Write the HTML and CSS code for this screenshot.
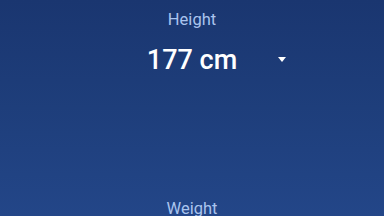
FILE: index.html
```html
<!DOCTYPE html>
<html lang="en">
<head>
  <meta charset="UTF-8" />
  <meta name="viewport" content="width=device-width, initial-scale=1.0"/>
  <title>Body measurements</title>
  <link rel="stylesheet" href="styles.css">
</head>
<body>

<div class="field">
  <div class="label">Height</div>
  <div class="value-row">
    <span></span>
    <span class="value">177 cm</span>
    <span class="arrow"></span>
  </div>
</div>

<div class="field field-weight">
  <div class="label">Weight</div>
</div>

</body>
</html>
```

FILE: styles.css
```css
html, body {
  height: 100%;
}
body {
  font-family: Roboto, 'Noto Sans', sans-serif;
  margin: 0;
  padding: 10px 0 0;
  box-sizing: border-box;
  overflow: hidden;
  background: linear-gradient(to bottom, #1a3670 0%, #1e3e7b 50%, #234688 100%);
  display: flex;
  flex-direction: column;
  align-items: center;
}
.field {
  display: flex;
  flex-direction: column;
  align-items: center;
}
.label {
  color: #aac4ee;
  font-size: 16.5px;
  line-height: 19px;
  text-align: center;
}
.value-row {
  display: grid;
  grid-template-columns: 1fr auto 1fr;
  align-items: center;
  width: 200px;
  margin-top: 15px;
}
.value {
  color: #ffffff;
  font-size: 27px;
  font-weight: 500;
  line-height: 32px;
}
.arrow {
  justify-self: end;
  margin-right: 6px;
  margin-top: -2px;
  width: 0;
  height: 0;
  border-left: 4px solid transparent;
  border-right: 4px solid transparent;
  border-top: 5px solid #ffffff;
}
.field-weight {
  margin-top: 123px;
}
```
